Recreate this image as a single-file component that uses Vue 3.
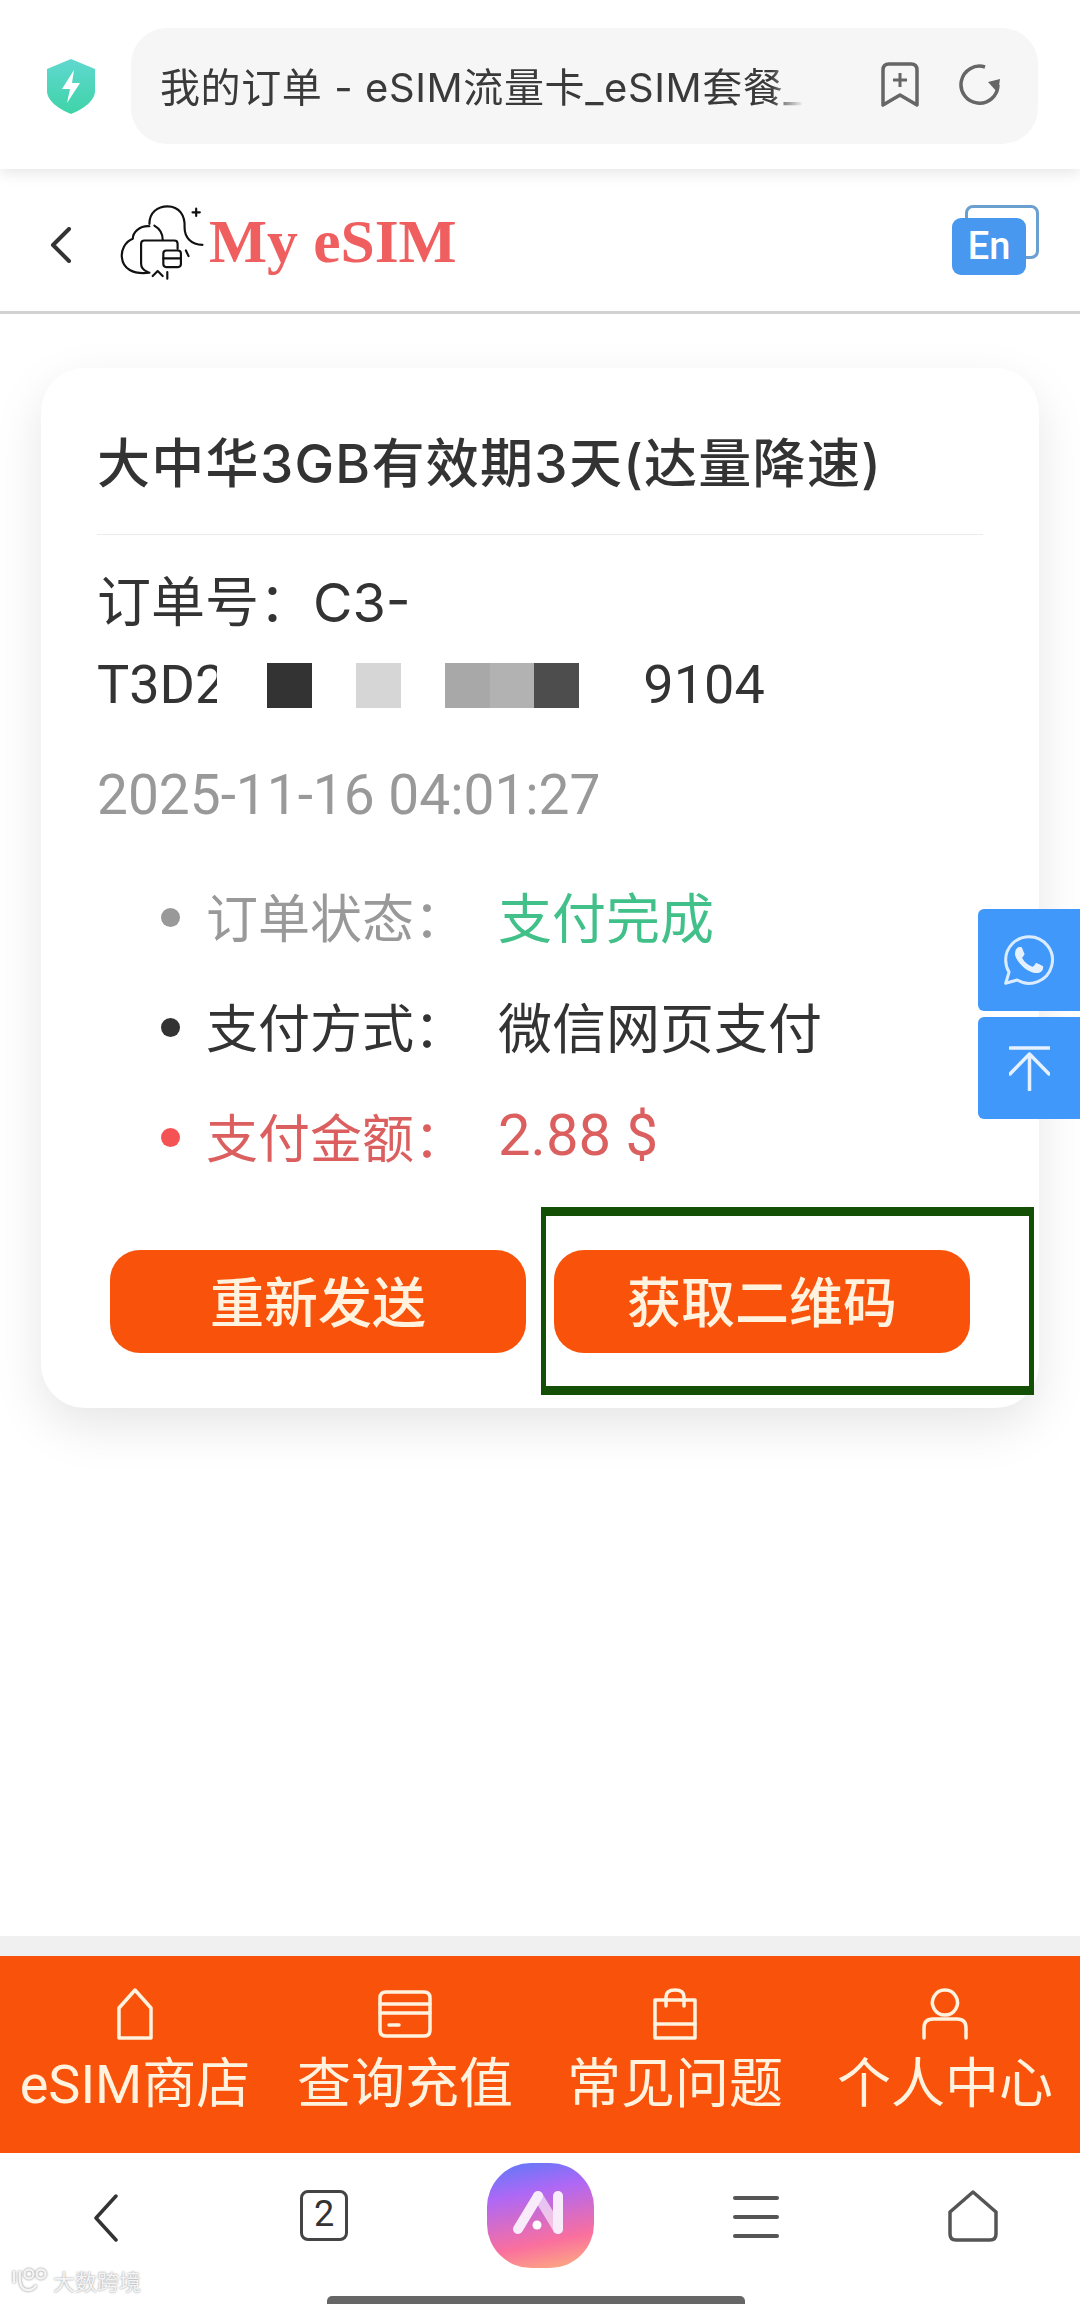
<template>
  <div class="page">
    <div class="browser">
      <svg class="shield" viewBox="0 0 48 55">
        <defs>
          <linearGradient id="sh" x1="0" y1="0" x2="0" y2="1">
            <stop offset="0" stop-color="#5fd8cf" />
            <stop offset="1" stop-color="#3fd3a8" />
          </linearGradient>
        </defs>
        <path d="M24 0 L48 10 V32 C48 42 36 50 24 55 C12 50 0 42 0 32 V10 Z" fill="url(#sh)" />
        <path d="M27 11 L15 30 H23 L20 44 L33 24 H25 Z" fill="#fff" />
      </svg>
      <div class="address">
        <span class="address-text">我的订单 - eSIM流量卡_eSIM套餐_全球</span>
        <svg class="addr-icon bookmark" viewBox="0 0 38 45" fill="none" stroke="#666" stroke-width="3.5">
          <path d="M2 8 Q2 2 8 2 H30 Q36 2 36 8 V43 L19 33 L2 43 Z" stroke-linejoin="round" />
          <path d="M19 11 V25 M12 18 H26" stroke-width="3" />
        </svg>
        <svg class="addr-icon refresh" viewBox="0 0 42 42" fill="none" stroke="#666" stroke-width="3.5">
          <path d="M26 3 A18.500 18.500 0 1 0 39 21" />
          <path d="M29 18 L41 15 L39 29 Z" fill="#666" stroke="none" />
        </svg>
      </div>
    </div>

    <header class="head">
      <svg class="back" viewBox="0 0 22 36" fill="none" stroke="#333" stroke-width="4" stroke-linecap="round" stroke-linejoin="round">
        <path d="M19 2 L3 18 L19 34" />
      </svg>
      <svg class="logo" viewBox="62 68 252 226" fill="none" stroke="#111" stroke-width="6.500" stroke-linecap="round" stroke-linejoin="round">
        <path d="M150 125 C150 90 175 72 205 72 C240 72 258 100 256 135 C256 165 275 188 310 188" />
        <path d="M150 132 C120 130 100 150 100 170 C75 180 65 205 67 225 C70 260 100 278 150 272" />
        <path d="M165 130 C182 140 190 155 190 172" />
        <path d="M235 200 V185 Q235 175 225 175 H135 Q125 175 125 185 V245 Q125 262 145 270" />
        <rect x="192" y="205" width="53" height="50" rx="9" />
        <path d="M192 229 H245" />
        <path d="M160 282 L175 267 L190 282 M204 270 V290 M260 205 L268 222" />
        <path d="M280 90 H302 M291 79 V101" />
      </svg>
      <span class="brand">My eSIM</span>
      <div class="lang">
        <span class="lang-back"></span>
        <span class="lang-front">En</span>
      </div>
    </header>

    <main class="main">
      <section class="card">
        <h1 class="title">大中华3GB有效期3天(达量降速)</h1>
        <div class="order-no">
          <div class="order-first">订单号：C3-</div>
          <div class="order-line">
            <span>T3D2</span>
            <span class="mask">
              <i v-for="(c, i) in maskCells" :key="i" :style="{ background: c }"></i>
            </span>
            <span>9104</span>
          </div>
        </div>
        <div class="date">2025-11-16 04:01:27</div>
        <ul class="info">
          <li v-for="row in rows" :key="row.label" :class="row.cls">
            <span class="dot"></span>
            <span class="label">{{ row.label }}：</span>
            <span class="value">{{ row.value }}</span>
          </li>
        </ul>
        <div class="actions">
          <button class="btn">重新发送</button>
          <button class="btn">获取二维码</button>
        </div>
        <div class="annotation"></div>
      </section>

      <div class="float">
        <button class="float-btn">
          <svg class="wa" viewBox="0 0 24 24">
            <path d="M12 2C6.480 2 2 6.480 2 12c0 1.900.53 3.680 1.450 5.200L2 22l4.950-1.400A10 10 0 1 0 12 2z" fill="none" stroke="#dcecff" stroke-width="1.300" stroke-linejoin="round" />
            <path fill="#e6f1ff" d="M17.472 14.382c-.297-.149-1.758-.867-2.030-.967-.273-.099-.471-.148-.67.150-.197.297-.767.966-.94 1.164-.173.199-.347.223-.644.075-.297-.150-1.255-.463-2.390-1.475-.883-.788-1.480-1.761-1.653-2.059-.173-.297-.018-.458.130-.606.134-.133.298-.347.446-.52.149-.174.198-.298.298-.497.099-.198.050-.371-.025-.52-.075-.149-.669-1.612-.916-2.207-.242-.579-.487-.5-.669-.51-.173-.008-.371-.010-.57-.010-.198 0-.52.074-.792.372-.272.297-1.040 1.016-1.040 2.479 0 1.462 1.065 2.875 1.213 3.074.149.198 2.096 3.200 5.077 4.487.709.306 1.262.489 1.694.625.712.227 1.360.195 1.871.118.571-.085 1.758-.719 2.006-1.413.248-.694.248-1.289.173-1.413-.074-.124-.272-.198-.57-.347z" />
          </svg>
        </button>
        <button class="float-btn">
          <svg class="top" viewBox="0 0 41 45" fill="none" stroke="#e6f1ff" stroke-width="3.500" stroke-linecap="round" stroke-linejoin="round">
            <path d="M1 2 H40 M20.500 8 V44 M1 28 L20.500 8 L40 28" />
          </svg>
        </button>
      </div>
    </main>

    <nav class="tabs">
      <div v-for="tab in tabs" :key="tab.name" class="tab">
        <svg class="tab-icon" viewBox="0 0 56 52" fill="none" stroke="#fff3e0" stroke-width="3.500" stroke-linejoin="round" stroke-linecap="round">
          <path v-for="d in tab.paths" :key="d" :d="d" />
        </svg>
        <span>{{ tab.name }}</span>
      </div>
    </nav>

    <div class="bottom">
      <svg class="nav-back" viewBox="0 0 26 48" fill="none" stroke="#333" stroke-width="3.500" stroke-linecap="round" stroke-linejoin="round">
        <path d="M23 2 L3 24 L23 46" />
      </svg>
      <span class="count">2</span>
      <div class="app">
        <svg viewBox="0 0 107 105" fill="none" stroke-linecap="round">
          <path d="M51 33 L71 66" stroke="#fff" stroke-opacity=".6" stroke-width="10" />
          <path d="M31 66 L51 33" stroke="#f8ecfb" stroke-width="10" />
          <path d="M71 33 V66" stroke="#f8ecfb" stroke-width="10" />
          <circle cx="50" cy="62" r="4.500" fill="#fff" />
        </svg>
      </div>
      <svg class="menu" viewBox="0 0 46 42" fill="#555">
        <rect width="46" height="4" y="0" rx="2" />
        <rect width="46" height="4" y="19" rx="2" />
        <rect width="46" height="4" y="38" rx="2" />
      </svg>
      <svg class="nav-home" viewBox="0 0 50 52" fill="none" stroke="#555" stroke-width="3.500" stroke-linejoin="round">
        <path d="M25 2 L48 22 V44 Q48 50 42 50 H8 Q2 50 2 44 V22 Z" />
      </svg>
      <div class="watermark">
        <svg viewBox="0 0 38 24" fill="none" stroke="#f4f4f4" stroke-width="2.500">
          <path d="M4 3 V15 M10 3 Q8 22 18 22 Q24 22 26 17" />
          <circle cx="19" cy="6" r="4.500" />
          <circle cx="31" cy="6" r="4.500" />
        </svg>
        <span>大数跨境</span>
      </div>
      <span class="indicator"></span>
    </div>
  </div>
</template>

<script setup>
const maskCells = ["#333", "#fff", "#d6d6d6", "#fff", "#a8a8a8", "#b2b2b2", "#4d4d4d"];

const rows = [
  { label: "订单状态", value: "支付完成", cls: "status" },
  { label: "支付方式", value: "微信网页支付", cls: "method" },
  { label: "支付金额", value: "2.88 $", cls: "amount" },
];

const tabs = [
  { name: "eSIM商店", paths: ["M28 2 L44 20 V50 H12 V20 Z"] },
  {
    name: "查询充值",
    paths: ["M9 4 H47 Q53 4 53 10 V42 Q53 48 47 48 H9 Q3 48 3 42 V10 Q3 4 9 4 Z", "M3 16 H53", "M3 25 H53", "M12 37 H22"],
  },
  {
    name: "常见问题",
    paths: ["M8 12 H48 V50 H8 Z", "M8 36 H48", "M19 18 V9 Q19 2 28 2 Q37 2 37 9 V18"],
  },
  {
    name: "个人中心",
    paths: ["M28 2 A12.500 12.500 0 1 1 27.900 2 Z", "M7 50 V40 Q7 31 16 31 H40 Q49 31 49 40 V50"],
  },
];
</script>

<style>
html,
body {
  margin: 0;
  background: #fff;
}
</style>

<style scoped>
.page {
  width: 1080px;
  height: 2304px;
  display: flex;
  flex-direction: column;
  overflow: hidden;
  background: #fff;
  color: #333;
  font-family: "Roboto", "Noto Sans CJK SC", sans-serif;
}
.browser {
  height: 169px;
  flex: none;
  display: flex;
  align-items: flex-start;
  padding: 28px 42px 0 47px;
  box-sizing: border-box;
  box-shadow: 0 4px 14px rgba(0, 0, 0, 0.1);
  position: relative;
}
.shield {
  width: 48px;
  height: 55px;
  margin: 31px 36px 0 0;
  flex: none;
}
.address {
  flex: 1;
  height: 116px;
  background: #f6f6f6;
  border-radius: 36px;
  display: flex;
  align-items: center;
  padding: 0 0 3px 29px;
  box-sizing: border-box;
  position: relative;
}
.address-text {
  font-family: "Inter", "Noto Sans CJK SC", sans-serif;
  font-size: 40px;
  letter-spacing: 0.6px;
  width: 650px;
  white-space: nowrap;
  overflow: hidden;
  color: #3a3a3a;
  -webkit-mask-image: linear-gradient(90deg, #000 94%, transparent 99%);
  mask-image: linear-gradient(90deg, #000 94%, transparent 99%);
}
.addr-icon {
  flex: none;
}
.bookmark {
  width: 38px;
  height: 45px;
  margin-left: 71px;
}
.refresh {
  width: 42px;
  height: 42px;
  margin-left: 40px;
}
.head {
  height: 124px;
  margin-top: 21px;
  flex: none;
  box-sizing: border-box;
  border-bottom: 3px solid #d2d2d2;
  display: flex;
  align-items: center;
  padding: 0 41px 16px 50px;
}
.back {
  width: 22px;
  height: 36px;
  margin-top: 4px;
}
.logo {
  width: 84px;
  height: 75px;
  margin: 0 5px 0 48px;
}
.brand {
  font-family: "Liberation Serif", serif;
  font-weight: 700;
  font-size: 61.500px;
  color: #ef5f5f;
  line-height: 1;
  flex: 1;
  margin-bottom: 2px;
}
.lang {
  width: 87px;
  height: 70px;
  position: relative;
  margin-bottom: 6px;
}
.lang-back {
  position: absolute;
  right: 0;
  top: 0;
  width: 74px;
  height: 54px;
  border: 3.500px solid #6a9fd0;
  border-radius: 8px;
  box-sizing: border-box;
}
.lang-front {
  position: absolute;
  left: 0;
  bottom: 0;
  width: 74px;
  height: 57px;
  background: #4798ee;
  border-radius: 9px;
  color: #fff;
  font-size: 38px;
  font-weight: 500;
  text-align: center;
  line-height: 57px;
}
.main {
  flex: 1;
  padding: 54px 41px 0;
  position: relative;
}
.card {
  height: 1040px;
  box-sizing: border-box;
  border-radius: 44px;
  background: #fff;
  box-shadow: 0 18px 50px rgba(0, 0, 0, 0.1);
  padding: 60px 56px 55px;
  position: relative;
  display: flex;
  flex-direction: column;
}
.title {
  margin: 0;
  font-family: "Inter", "Noto Sans CJK SC", sans-serif;
  font-size: 53px;
  letter-spacing: 1.300px;
  font-weight: 500;
  line-height: 72px;
  padding-bottom: 34px;
  border-bottom: 1px solid #ececec;
  color: #333;
  white-space: nowrap;
}
.order-no {
  font-size: 54px;
  line-height: 82px;
  margin-top: 27px;
}
.order-first {
  font-family: "Inter", "Noto Sans CJK SC", sans-serif;
}
.order-line {
  display: flex;
  align-items: center;
}
.mask {
  display: flex;
  align-items: center;
  width: 411px;
  height: 108px;
  margin: -13px 15px -13px -8px;
  padding-left: 50px;
  box-sizing: border-box;
  background: #fff;
  position: relative;
}
.mask i {
  display: block;
  width: 44.500px;
  height: 45px;
  flex: none;
}
.date {
  font-size: 55px;
  line-height: 80px;
  color: #999;
  margin-top: 29px;
}
.info {
  list-style: none;
  margin: 25px 0 0;
  padding: 0 0 0 64px;
}
.info li {
  height: 110px;
  display: flex;
  align-items: center;
  font-size: 52px;
}
.dot {
  width: 19px;
  height: 19px;
  border-radius: 50%;
  background: currentColor;
  margin: 4px 26px 0 0;
  flex: none;
}
.label {
  width: 292px;
  flex: none;
}
.value {
  font-size: 54px;
}
.status {
  color: #999;
}
.status .value {
  color: #42c08a;
}
.method {
  color: #333;
}
.amount {
  color: #dc5f5f;
}
.amount .value {
  font-size: 58px;
}
.amount .dot {
  background: #f55353;
}
.actions {
  display: flex;
  gap: 28px;
  margin: auto 13px 0;
}
.btn {
  flex: 1;
  height: 103px;
  border: none;
  border-radius: 30px;
  background: #f9530b;
  color: #fff3e0;
  font: 500 54px "Roboto", "Noto Sans CJK SC", sans-serif;
  padding: 0 0 5px;
}
.annotation {
  position: absolute;
  left: 500px;
  top: 839px;
  width: 493px;
  height: 188px;
  box-sizing: border-box;
  border: solid #144f06;
  border-width: 9px 5px;
}
.float {
  position: absolute;
  right: 0;
  top: 595px;
  display: flex;
  flex-direction: column;
  gap: 6px;
}
.float-btn {
  width: 102px;
  height: 102px;
  border: none;
  padding: 0;
  background: #4098fa;
  border-radius: 6px 0 0 6px;
  display: flex;
  align-items: center;
  justify-content: center;
}
.wa {
  width: 56px;
  height: 56px;
}
.top {
  width: 41px;
  height: 45px;
}
.tabs {
  flex: none;
  height: 197px;
  border-top: 20px solid #f0f0f0;
  background: #f9530b;
  display: flex;
  color: #fff3e0;
}
.tab {
  flex: 1;
  display: flex;
  flex-direction: column;
  align-items: center;
  padding-top: 32px;
  font-size: 54px;
  line-height: 74px;
  white-space: nowrap;
}
.tab-icon {
  width: 56px;
  height: 52px;
  margin-bottom: 8px;
}
.bottom {
  height: 151px;
  flex: none;
  position: relative;
  display: flex;
  align-items: flex-start;
  padding: 10px 0 0 93px;
  box-sizing: border-box;
}
.nav-back {
  width: 26px;
  height: 48px;
  margin-top: 31px;
}
.count {
  width: 48px;
  height: 51px;
  margin: 27px 0 0 181px;
  box-sizing: border-box;
  border: 3.500px solid #444;
  border-radius: 8px;
  font-size: 36px;
  line-height: 43px;
  text-align: center;
  color: #333;
}
.app {
  width: 107px;
  height: 105px;
  margin-left: 139px;
  border-radius: 44px;
  background: linear-gradient(168deg, #5a7af9 0%, #ae68f5 30%, #fa6f9e 72%, #fdb37c 100%);
}
.app svg {
  display: block;
  width: 107px;
  height: 105px;
}
.menu {
  width: 46px;
  height: 42px;
  margin: 33px 0 0 139px;
}
.nav-home {
  width: 50px;
  height: 52px;
  margin: 27px 0 0 169px;
}
.watermark {
  position: absolute;
  left: 10px;
  bottom: 8px;
  display: flex;
  align-items: center;
  gap: 5px;
  font-size: 22px;
  color: #f4f4f4;
  text-shadow: 0 0 2px #888;
}
.watermark svg {
  width: 38px;
  height: 24px;
  filter: drop-shadow(0 0 1px #888);
}
.indicator {
  position: absolute;
  left: 327px;
  bottom: 0;
  width: 418px;
  height: 8px;
  border-radius: 5px 5px 0 0;
  background: #666;
}
</style>
